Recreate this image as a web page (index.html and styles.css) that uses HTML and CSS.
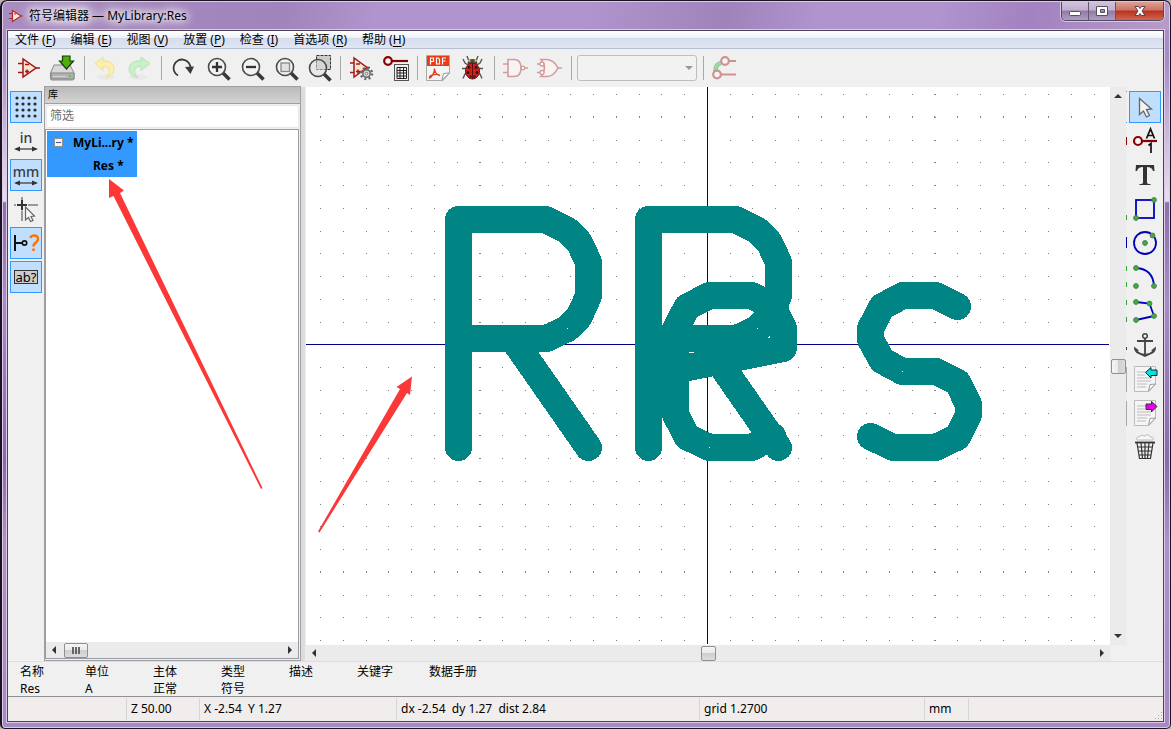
FILE: index.html
```html
<!DOCTYPE html>
<html lang="zh-CN">
<head>
<meta charset="utf-8">
<title>符号编辑器 — MyLibrary:Res</title>
<link rel="stylesheet" href="styles.css">
</head>
<body>
<div class="window">
  <header class="titlebar">
    <svg class="app-icon" viewBox="0 0 14 14"><path d="M3.500 1.500V12.500L12 7Z" fill="#fbeedd" stroke="#b3262b" stroke-width="1.200"/><path d="M0 4.500H3.500M0 9.500H3.500M12 7H14M5 5H7" stroke="#b3262b" fill="none"/></svg>
    <h1 class="title">符号编辑器 — MyLibrary:Res</h1>
    <div class="caption-buttons">
      <button class="cap" aria-label="最小化"><svg viewBox="0 0 14 14"><rect x="1.500" y="7.500" width="11" height="4" rx="1" fill="#fff" stroke="#555060"/></svg></button>
      <button class="cap" aria-label="最大化"><svg viewBox="0 0 14 14"><path d="M1.500 2.500H12.500V11.500H1.500ZM5.500 5.500V8.500H9.500V5.500Z" fill="#fff" fill-rule="evenodd" stroke="#555060"/></svg></button>
      <button class="cap cap-close" aria-label="关闭"><svg viewBox="0 0 14 14"><path d="M2 2.500H5.500L7 4.500L8.500 2.500H12L9 7L12 11.500H8.500L7 9.500L5.500 11.500H2L5 7Z" fill="#fff" stroke="#5b3e46"/></svg></button>
    </div>
  </header>
  <div class="client">
    <nav class="menubar">
      <button class="menu">文件 (<u>F</u>)</button>
      <button class="menu">编辑 (<u>E</u>)</button>
      <button class="menu">视图 (<u>V</u>)</button>
      <button class="menu">放置 (<u>P</u>)</button>
      <button class="menu">检查 (<u>I</u>)</button>
      <button class="menu">首选项 (<u>R</u>)</button>
      <button class="menu">帮助 (<u>H</u>)</button>
    </nav>
    <div class="toolbar">
      <button class="tool" aria-label="新建符号"><svg viewBox="0 0 26 26"><path d="M8 4V22L21 13Z" fill="#f9e6cd" stroke="#a5161b" stroke-width="1.500"/><path d="M3 8.500H8M3 17.500H8M21 13H25M10 9.500H14M10 16.500H14M12 14.500V18.500" stroke="#a5161b" stroke-width="1.500" fill="none"/></svg></button>
      <button class="tool" aria-label="保存"><svg viewBox="0 0 26 26"><path d="M5 10H21L25 18V23.500Q25 25 23.500 25H3Q1.500 25 1.500 23.500V18Z" fill="#d8d8d8" stroke="#8a8a8a"/><path d="M2 18H25V24H2Z" fill="#b2b2b2" stroke="#858585"/><path d="M4 21.500H17" stroke="#d5d5d5"/><rect x="20" y="20" width="2" height="2" fill="#35dc31"/><path d="M13.500 1H21V6H24.500L17.500 14L10.500 6H13.500Z" fill="#4fae0c" stroke="#173f05" stroke-width="1.200"/></svg></button>
      <span class="sep"></span>
      <button class="tool" aria-label="撤销"><svg viewBox="0 0 26 26"><ellipse cx="14" cy="22" rx="9" ry="3" fill="#e9e9e9"/><path d="M3 8.500L11 2V6C18 5 22 9 22 14C22 19 18 22 14 22.500C17 20 18 17 17 14.500C16 12 14 11 11 11.500V15.500Z" fill="#faf0ac" stroke="#ece09a"/></svg></button>
      <button class="tool" aria-label="重做"><svg viewBox="0 0 26 26"><ellipse cx="12" cy="22" rx="9" ry="3" fill="#e9e9e9"/><path d="M24 8.500L15 2V6C8 5 3 9 3 14C3 19 7 22 12 22.500C9 20 8 17 9 14.500C10 12 12 11 15 11.500V15.500Z" fill="#caf0ca" stroke="#b5e3b7"/></svg></button>
      <span class="sep"></span>
      <button class="tool" aria-label="刷新"><svg viewBox="0 0 26 26"><path d="M9 20.500A8.500 8.500 0 1 1 21.500 14" fill="none" stroke="#3a3a3a" stroke-width="1.800"/><path d="M16 12L25 11.500L21.500 19Z" fill="#3a3a3a"/></svg></button>
      <button class="tool" aria-label="放大"><svg viewBox="-2 0 26 26"><path d="M18 18L24.500 24.500" stroke="#383838" stroke-width="3.500"/><circle cx="12" cy="12" r="8.500" fill="#f2f2f2" stroke="#4a4a4a" stroke-width="1.600"/><path d="M12 7V17M7 12H17" stroke="#333" stroke-width="2.300"/></svg></button>
      <button class="tool" aria-label="缩小"><svg viewBox="-2 0 26 26"><path d="M18 18L24.500 24.500" stroke="#383838" stroke-width="3.500"/><circle cx="12" cy="12" r="8.500" fill="#f2f2f2" stroke="#4a4a4a" stroke-width="1.600"/><path d="M7 12H17" stroke="#333" stroke-width="2.300"/></svg></button>
      <button class="tool" aria-label="缩放适应"><svg viewBox="-2 0 26 26"><path d="M18 18L24.500 24.500" stroke="#383838" stroke-width="3.500"/><circle cx="12" cy="12" r="8.500" fill="#f2f2f2" stroke="#4a4a4a" stroke-width="1.600"/><rect x="8" y="8" width="8.500" height="8.500" fill="#e2e2e2" stroke="#888" stroke-width="1.300"/></svg></button>
      <button class="tool" aria-label="缩放选区"><svg viewBox="-2 0 26 26"><rect x="9.500" y="0.500" width="14" height="14" fill="#ccc" stroke="#333" stroke-dasharray="3 1"/><path d="M17 19L23.500 25.500" stroke="#383838" stroke-width="3.500"/><circle cx="11" cy="13" r="8.500" fill="#e0e0e0" fill-opacity="0.500" stroke="#4a4a4a" stroke-width="1.600"/></svg></button>
      <span class="sep"></span>
      <button class="tool" aria-label="符号属性"><svg viewBox="0 0 26 26"><path d="M6 3V22L19 12.500Z" fill="#f9e6cd" stroke="#a5161b" stroke-width="1.500"/><path d="M2 8H6M2 17.500H6M19 12.500H22M8 9H12M8 16.500H12M10 14.500V18.500" stroke="#a5161b" stroke-width="1.500" fill="none"/><circle cx="18.500" cy="18.500" r="5.500" fill="none" stroke="#666" stroke-width="2.500" stroke-dasharray="2 2.320"/><circle cx="18.500" cy="18.500" r="3.700" fill="#ddd" stroke="#666" stroke-width="1.500"/><circle cx="18.500" cy="18.500" r="1.300" fill="#eee" stroke="#777"/></svg></button>
      <button class="tool" aria-label="引脚表"><svg viewBox="0 0 26 26"><circle cx="6" cy="6" r="3.800" fill="#f5f5f5" stroke="#8b0000" stroke-width="2.200"/><path d="M10 6H26" stroke="#8b0000" stroke-width="2.200"/><rect x="12.500" y="9.500" width="14" height="16" fill="#eee" stroke="#555"/><path d="M15 12.500H24.500V23.500H15ZM15 15.500H24.500M15 18H24.500M15 21H24.500M18 12.500V23.500M21.500 12.500V23.500" fill="none" stroke="#222"/></svg></button>
      <span class="sep"></span>
      <button class="tool" aria-label="数据手册"><svg viewBox="0 0 26 26"><path d="M1.500 0.500H24.500V18L18 25.500H1.500Z" fill="#f4f4f4" stroke="#aaa"/><path d="M17 25L18.500 18.500L24.500 18Z" fill="#fff" stroke="#999"/><rect x="2" y="1" width="22" height="10" fill="#e83b16"/><path d="M5.500 9.500V3H8.500V6.500H5.500M11.500 3V9H14.500V4.500L13.500 3ZM21 3H17.500V9.500M17.500 6H20.500" fill="none" stroke="#fff" stroke-width="1.200"/><path d="M9.500 13.500C10 18 6 23 4.500 23C4 20 12 18 15 20.500M9.500 14C10 17 12 20 15 20.500" fill="none" stroke="#e23a19" stroke-width="1.300"/></svg></button>
      <button class="tool" aria-label="检查符号"><svg viewBox="0 0 26 26"><path d="M8 1L9.500 5M19 1L17.500 5M4 4L6 8L9 10M23 4L21 8L18 10M3 13.500H7M24 13.500H20M4 23.500L6 19L8 18M23 23.500L21 19L19 18" fill="none" stroke="#555" stroke-width="1.400"/><path d="M8.500 9Q8.500 4 13.500 4Q18.500 4 18.500 9Z" fill="#4c4c43"/><path d="M9.500 6H11.500M15.500 6H17.500" stroke="#d9d32d" stroke-width="1.500"/><ellipse cx="13.500" cy="16" rx="7" ry="8" fill="#cf201c" stroke="#701212"/><path d="M13.500 8V24" stroke="#511"/><circle cx="10" cy="12.500" r="1.400" fill="#311"/><circle cx="17" cy="12.500" r="1.400" fill="#311"/><circle cx="9" cy="17.500" r="1.400" fill="#311"/><circle cx="18" cy="17.500" r="1.400" fill="#311"/><circle cx="11.500" cy="21.500" r="1.100" fill="#311"/><circle cx="15.500" cy="21.500" r="1.100" fill="#311"/></svg></button>
      <span class="sep"></span>
      <button class="tool" aria-label="标准符号" disabled><svg viewBox="0 0 26 26"><path d="M6 4.500H12Q19 4.500 19 13Q19 21.500 12 21.500H6Z" fill="#f8f4f2" stroke="#d49b9b" stroke-width="1.600"/><circle cx="21" cy="13" r="1.800" fill="#fff" stroke="#d49b9b" stroke-width="1.300"/><path d="M1 9H6M1 17.500H6M23 13H26" stroke="#d49b9b" stroke-width="1.500"/></svg></button>
      <button class="tool" aria-label="德摩根符号" disabled><svg viewBox="0 0 26 26"><path d="M5 4.500H11Q18 5 22 13Q18 21 11 21.500H5Q12 13 5 4.500Z" fill="#f8f4f2" stroke="#d49b9b" stroke-width="1.600"/><path d="M1 9H4M1 17.500H4M22 13H26" stroke="#d49b9b" stroke-width="1.500"/><circle cx="6" cy="9" r="2" fill="#fff" stroke="#d49b9b" stroke-width="1.300"/><circle cx="6" cy="17.500" r="2" fill="#fff" stroke="#d49b9b" stroke-width="1.300"/></svg></button>
      <span class="sep"></span>
      <label class="unit-select"><select aria-label="单位" disabled><option></option></select></label>
      <span class="sep"></span>
      <button class="tool" aria-label="同步引脚" disabled><svg viewBox="0 0 26 26"><path d="M4.500 16Q4.500 9 10 8" fill="none" stroke="#a8b9a8" stroke-width="4.500"/><path d="M4.500 16Q4.500 9 10 8" fill="none" stroke="#92dda0" stroke-width="3"/><circle cx="14" cy="6" r="3.800" fill="#f5f5f5" stroke="#cd9393" stroke-width="2.200"/><circle cx="6" cy="19.500" r="3.800" fill="#f5f5f5" stroke="#cd9393" stroke-width="2.200"/><path d="M18 6H25M10 19.500H25" stroke="#cd9393" stroke-width="2.200"/></svg></button>
    </div>
    <div class="workspace">
      <div class="rail rail-left">
        <button class="rail-btn on" aria-label="显示栅格"><svg viewBox="0 0 26 26"><path d="M4 4H25M4 10H25M4 16H25M4 22H25" stroke="#2c2c2c" stroke-width="3.200" stroke-linecap="round" stroke-dasharray="0 6"/></svg></button>
        <button class="rail-btn"><span class="unit">in</span><svg class="unit-arrow" viewBox="0 0 26 6"><path d="M3 3H23" stroke="#333" stroke-width="1.200"/><path d="M1 3L7 0.500V5.500ZM25 3L19 0.500V5.500Z" fill="#333"/></svg></button>
        <button class="rail-btn on"><span class="unit">mm</span><svg class="unit-arrow" viewBox="0 0 26 6"><path d="M3 3H23" stroke="#333" stroke-width="1.200"/><path d="M1 3L7 0.500V5.500ZM25 3L19 0.500V5.500Z" fill="#333"/></svg></button>
        <button class="rail-btn" aria-label="光标形状"><svg viewBox="0 0 26 26"><path d="M9 1V4M9 14.500V25M1 9H3M15 9H25" stroke="#999" stroke-width="2"/><path d="M9 4V14M4 9H14" stroke="#333" stroke-width="2"/><path d="M12.500 11V24L15.500 21.500L17.500 25.500L20 24.500L18 20.500L21.500 20Z" fill="#f7f7f7" stroke="#666" stroke-width="1.200"/></svg></button>
        <button class="rail-btn on" aria-label="显示引脚电气类型"><svg viewBox="0 0 26 26"><path d="M2 5V21M2 13H9" stroke="#111" stroke-width="2"/><circle cx="11.500" cy="13" r="2.200" fill="none" stroke="#111" stroke-width="1.700"/><path d="M17.500 8Q18 5.500 21 5.500Q25 5.500 25 9Q25 11 23 12.500Q20.500 14 20.500 16.500M20.500 18.500V21" fill="none" stroke="#ff7200" stroke-width="2.500"/></svg></button>
        <button class="rail-btn on"><span class="ab">ab?</span></button>
      </div>
      <section class="tree-panel">
        <h2 class="tree-title">库</h2>
        <input class="filter" type="text" placeholder="筛选" aria-label="筛选">
        <div class="tree">
          <ul class="nodes">
            <li class="node"><button class="expander" aria-label="折叠"></button><span>MyLi...ry *</span></li>
            <li class="node leaf"><span>Res *</span></li>
          </ul>
          <svg class="callout callout-tree" viewBox="0 0 155 311"><path d="M0 0L15 11.500L11 14L153.500 309L152 310L4.500 17L0 19Z" fill="#fb3737"/></svg>
          <div class="hbar tree-bar"><i class="tri left"></i><i class="thumb grip"></i><i class="tri right"></i></div>
        </div>
      </section>
      <div class="sash"></div>
      <main class="editor">
        <svg class="sheet" viewBox="306 87 804 558" preserveAspectRatio="xMidYMid slice">
          <defs>
            <pattern id="dots" x="320" y="94" width="91" height="91" patternUnits="userSpaceOnUse"><path d="M0 .5h1m22 0h1m22 0h1m21 0h1M0 23.500h1m22 0h1m22 0h1m21 0h1M0 46.500h1m22 0h1m22 0h1m21 0h1M0 68.500h1m22 0h1m22 0h1m21 0h1" stroke="#808080" shape-rendering="crispEdges"/></pattern>
            <pattern id="dots-right" href="#dots" patternTransform="translate(1 0)"/>
            <pattern id="dots-up" href="#dots" patternTransform="translate(0 -1)"/>
          </defs>
          <path d="M306 87H1110V645H306Z" fill="#fff"/>
          <path d="M306 87H1110V645H306Z" fill="url(#dots)"/>
          <path d="M480 87h1v558h-1ZM935 87h1v558h-1Z" fill="url(#dots-right)"/>
          <path d="M306 116h804v1H306ZM306 571h804v1H306Z" fill="url(#dots-up)"/>
          <path d="M306 344.500H1109M707.500 87V644" stroke="#000084" shape-rendering="crispEdges"/>
          <g fill="none" stroke="#008484" stroke-width="27" stroke-linecap="round" stroke-linejoin="round" shape-rendering="crispEdges">
            <path id="r" d="M458.500 447.500V219.500H545.500L567.500 230.500L579 242L588.500 262V296L579 317L567.500 328.500L546.500 338.500H458.500M512.500 338.500L588.500 447.500"/>
            <use href="#r" x="190"/>
            <path d="M773 436.500L751.500 447.500H709.500L687 436.800L675.500 414.500V329L687 307L709.500 295.500H751.500L773 306.500L783.500 328V348.500L675.500 370"/>
            <path d="M957.500 306.500L935.500 295.500H903L882 306.500L870.500 328.500V339.500L882 360.500L902.500 371.500H936L957.700 382.500L968.500 404.500V415L957.500 437L935.500 447.500H893L870.500 436.500"/>
          </g>
          <path d="M412 376.500L396.500 387L400 389L318 531.500L319.500 532.500L407 393L410 395Z" fill="#fb3737"/>
        </svg>
        <div class="vbar"><i class="tri up"></i><i class="thumb"></i><i class="tri down"></i></div>
        <div class="hbar"><i class="tri left"></i><i class="thumb"></i><i class="tri right"></i></div>
      </main>
      <div class="rail-right-wrap">
        <svg class="edge" viewBox="0 0 1 374" shape-rendering="crispEdges"><path d="M0 4h1v1H0ZM0 35h1v1H0Z" fill="#2f94f5"/><path d="M0 50h1v8H0Z" fill="#8b0000"/><path d="M0 150h1v11H0Z" fill="#00a"/><path d="M0 128h1v5H0ZM0 179h1v5H0ZM0 195h1v5H0ZM0 213h1v5H0ZM0 230h1v5H0Z" fill="#36a336"/><path d="M0 260h1v3H0Z" fill="#444"/><path d="M0 280h1v25H0ZM0 314h1v25H0Z" fill="#aaa"/></svg>
        <div class="rail">
          <button class="rail-btn on" aria-label="选择"><svg viewBox="0 0 26 26"><path d="M7.500 4.500V20.500L11.500 17L14.500 23L17.500 21.500L14.500 15.500L19.500 15Z" fill="#f5f3ef" stroke="#666" stroke-width="1.300"/></svg></button>
          <button class="rail-btn" aria-label="引脚"><svg viewBox="0 0 26 26"><circle cx="6" cy="13" r="4" fill="#f5f5f5" stroke="#8b0000" stroke-width="2.200"/><path d="M10 13H25" stroke="#8b0000" stroke-width="2.200"/><path d="M14.500 10.500L18.500 1L22.500 10.500M16 7.500H21M16.500 17.500L19 15.500V25" fill="none" stroke="#111" stroke-width="1.700"/></svg></button>
          <button class="rail-btn" aria-label="文字"><svg viewBox="0 0 26 26"><path d="M4 3H22L22.500 9H21Q20 5 15 5V20.500Q15 22 18.500 22V23H7.500V22Q11 22 11 20.500V5Q6 5 5 9H3.500Z" fill="#333"/></svg></button>
          <button class="rail-btn" aria-label="矩形"><svg viewBox="0 0 26 26"><rect x="4" y="4" width="18" height="18" fill="none" stroke="#0000c2" stroke-width="1.800"/><g fill="#36b336" stroke="#557a55"><circle cx="4" cy="22" r="2.400"/><circle cx="22" cy="4" r="2.400"/></g></svg></button>
          <button class="rail-btn" aria-label="圆"><svg viewBox="0 0 26 26"><circle cx="13" cy="13" r="11" fill="none" stroke="#0000b8" stroke-width="1.800"/><g fill="#36b336" stroke="#557a55"><circle cx="13" cy="13" r="2.400"/><circle cx="20.500" cy="5.500" r="2.400"/></g></svg></button>
          <button class="rail-btn" aria-label="圆弧"><svg viewBox="0 0 26 26"><path d="M4 4Q21 5 22 22" fill="none" stroke="#0000c2" stroke-width="1.800"/><g fill="#36b336" stroke="#557a55"><circle cx="4" cy="4" r="2.400"/><circle cx="4" cy="22" r="2.400"/><circle cx="22" cy="22" r="2.400"/></g></svg></button>
          <button class="rail-btn" aria-label="线"><svg viewBox="0 0 26 26"><path d="M4 4L17.500 5.500L22 18L4 22" fill="none" stroke="#0000c2" stroke-width="1.800"/><g fill="#36b336" stroke="#557a55"><circle cx="4" cy="4" r="2.400"/><circle cx="17.500" cy="5.500" r="2.400"/><circle cx="22" cy="18" r="2.400"/><circle cx="4" cy="22" r="2.400"/></g></svg></button>
          <button class="rail-btn" aria-label="锚点"><svg viewBox="0 0 26 26"><circle cx="13" cy="4" r="2.300" fill="none" stroke="#444" stroke-width="1.500"/><path d="M13 6V23M5 9H21" stroke="#444" stroke-width="1.800"/><path d="M2 14.500L7 18.500L5.500 19Q8 21.500 13 22Q18 21.500 20.500 19L19 18.500L24 14.500Q24 19 21.500 21L13 25L4.500 21Q2 19 2 14.500Z" fill="#444"/></svg></button>
          <button class="rail-btn" aria-label="导入"><svg viewBox="0 0 26 26"><path d="M2.500 0.500H23.500V18L17 25.500H2.500Z" fill="#f5f5f5" stroke="#bbb"/><path d="M5 6H14M5 9H13M5 12H19M5 15H19M5 18H15M5 21H14" stroke="#bbb"/><path d="M16.500 25L18 18.500L23.500 18Z" fill="#fff" stroke="#999"/><path d="M13.500 6.500L19 1.500V4H25V9.500H19V12Z" fill="#00e3e3" stroke="#222"/></svg></button>
          <button class="rail-btn" aria-label="导出"><svg viewBox="0 0 26 26"><path d="M2.500 0.500H23.500V18L17 25.500H2.500Z" fill="#f5f5f5" stroke="#bbb"/><path d="M5 6H14M5 9H13M5 12H19M5 15H19M5 18H15M5 21H14" stroke="#bbb"/><path d="M16.500 25L18 18.500L23.500 18Z" fill="#fff" stroke="#999"/><path d="M25 6.500L19.500 1.500V4H14V9.500H19.500V12Z" fill="#ec00ec" stroke="#333"/></svg></button>
          <button class="rail-btn" aria-label="删除"><svg viewBox="0 0 26 26"><path d="M5 6Q3 3 7 3Q9 0 13 2Q17 -1 18 3Q23 3 21 6Z" fill="#f8f8f8" stroke="#bbb"/><path d="M3 8.500H23" stroke="#333" stroke-width="1.800"/><path d="M5 9L7.500 24.500H18.500L21 9M9 9L10.500 24M13 9V24M17 9L15.500 24M5.500 13H20.500M6 17H20M7 21H19" fill="none" stroke="#333" stroke-width="1.200"/></svg></button>
        </div>
      </div>
    </div>
    <dl class="info">
      <div><dt>名称</dt><dd>Res</dd></div>
      <div><dt>单位</dt><dd>A</dd></div>
      <div><dt>主体</dt><dd>正常</dd></div>
      <div><dt>类型</dt><dd>符号</dd></div>
      <div><dt>描述</dt><dd></dd></div>
      <div><dt>关键字</dt><dd></dd></div>
      <div><dt>数据手册</dt><dd></dd></div>
    </dl>
    <footer class="status">
      <span></span><span>Z 50.00</span><span>X -2.54&nbsp; Y 1.27</span><span>dx -2.54&nbsp; dy 1.27&nbsp; dist 2.84</span><span>grid 1.2700</span><span>mm</span>
      <span class="resize"><svg viewBox="0 0 9 9"><path d="M7 1h1v1H7ZM4 4h1v1H4ZM7 4h1v1H7ZM1 7h1v1H1ZM4 7h1v1H4ZM7 7h1v1H7Z" fill="#aaa"/></svg></span>
    </footer>
  </div>
</div>
</body>
</html>
```
FILE: styles.css
```css
* { box-sizing: border-box; }
body {
  margin: 0;
  background: #b9b3ad;
  color: #000;
  font: 12px/16px "Noto Sans", "Noto Sans CJK SC", sans-serif;
}
button, input, select { font: inherit; color: inherit; }
button { border: 0; padding: 0; background: none; }
svg { display: block; }

.window {
  display: flex;
  flex-direction: column;
  height: 100vh;
  padding: 0 6px 6px 5px;
  border: 1px solid #1b1322;
  border-left-width: 2px;
  border-radius: 7px 7px 5px 5px;
  box-shadow: inset 0 0 0 1px #dccbe8;
  background: linear-gradient(#ab8fc8 0, #a88bc6 60px, #c3abd4 110px, #eadcee 200px, #8f6fae 202px, #a98bc8 300px, #8a6aa8 460px, #b08fca 540px, #a588c4 100%);
}
.titlebar {
  display: flex;
  align-items: center;
  gap: 6px;
  height: 28px;
  flex: none;
  margin: 1px -5px 0 -4px;
  padding-left: 6px;
  border-radius: 6px 6px 0 0;
  background: linear-gradient(100deg, #a98cc0 0, #a184bc 24%, #b194cd 32%, #b194cd 50%, #a083bb 62%, #b094ce 70%, #b094ce 80%, #a282c0 88%, #b99bc9 100%);
}
.app-icon { width: 14px; height: 14px; }
.title {
  margin: 0;
  font-size: 12px;
  font-weight: 400;
  text-shadow: 0 0 6px #fff, 0 0 10px #fff, 0 0 14px #fff, 0 0 14px #fff;
}
.caption-buttons {
  display: flex;
  align-self: flex-start;
  margin-left: auto;
  margin-right: 5px;
  border: 1px solid #554a63;
  border-top: 0;
  border-radius: 0 0 5px 5px;
  overflow: hidden;
  box-shadow: 0 0 0 1px #d8c5e3;
}
.cap {
  display: grid;
  place-items: center;
  width: 27px;
  height: 18px;
  border-right: 1px solid #62566f;
  background: linear-gradient(#d0c2dc, #c0afd0 45%, #8e7ba5 50%, #b09cc2);
}
.cap svg { width: 14px; height: 14px; }
.cap-close { width: 47px; border: 0; background: linear-gradient(#dba294, #cd7263 45%, #b83121 50%, #d2664c); }

.client {
  display: flex;
  flex-direction: column;
  flex: 1;
  min-height: 0;
  border: 1px solid #4c4156;
  background: #f0f0f0;
  box-shadow: 0 0 0 1px #dccbe8;
}
.menubar {
  display: flex;
  flex: none;
  gap: 15px;
  height: 18px;
  padding-left: 7px;
  border-bottom: 1px solid #b7bfd3;
  background: linear-gradient(#fff 0, #f0f3f9 38%, #d5dcec 40%, #dfe5f3 100%);
}
.menu u { text-underline-offset: 2px; }

.toolbar { display: flex; flex: none; align-items: center; height: 38px; padding-left: 3px; }
.tool { display: grid; place-items: center; width: 34px; height: 34px; }
.tool svg, .rail-btn svg { width: 26px; height: 26px; overflow: visible; }
.sep { width: 9px; height: 24px; padding-left: 5px; }
.sep::before { content: ""; display: block; width: 1px; height: 24px; background: #a8a8a8; }
.unit-select { position: relative; width: 120px; margin: 0 1px 0 2px; }
.unit-select select {
  display: block;
  width: 100%;
  height: 26px;
  appearance: none;
  border: 1px solid #aaa;
  border-radius: 3px;
  background: #f4f4f4;
}
.unit-select::after {
  content: "";
  position: absolute;
  right: 4px;
  top: 11px;
  border: 4px solid transparent;
  border-top-color: #999;
  border-bottom: 0;
}

.workspace { display: flex; flex: 1; min-height: 0; }
.rail { display: flex; flex-direction: column; gap: 2px; padding-top: 4px; }
.rail-left { width: 36px; padding-left: 2px; }
.rail-btn {
  display: flex;
  flex-direction: column;
  align-items: center;
  justify-content: center;
  width: 32px;
  height: 32px;
  border: 1px solid transparent;
}
.rail-btn.on { border-color: #3399ff; background: #c0dfff; }
.unit { font: 500 14px/16px "Noto Sans", sans-serif; color: #3b3b3b; }
.rail-btn .unit-arrow { height: 6px; }
.ab {
  padding: 0 1px;
  border: 1px solid #333;
  background: #ccc;
  font: 13px/12px "Noto Sans", sans-serif;
}

.tree-panel {
  display: flex;
  flex-direction: column;
  flex: 0 0 257px;
  margin-top: -1px;
  border: 1px solid #a0a0a0;
  background: #f0f0f0;
}
.tree-title {
  margin: 0;
  height: 17px;
  padding-left: 3px;
  border-bottom: 1px solid #a0a0a0;
  background: linear-gradient(#bababa, #d4d4d4);
  font-size: 10px;
  font-weight: 400;
  line-height: 15px;
}
.filter {
  margin: 1px;
  height: 23px;
  padding: 0 3px 2px;
  border: 1px solid #e3e9ef;
  border-radius: 2px;
  background: #fff;
}
.filter::placeholder { color: #6d6d6d; opacity: 1; }
.tree {
  position: relative;
  display: flex;
  flex: 1;
  flex-direction: column;
  justify-content: space-between;
  margin: 0 1px 1px 0;
  border: 1px solid #989ca4;
  background: #fff;
}
.nodes {
  width: 90px;
  margin: 1px;
  padding: 0;
  background: #3399ff;
  list-style: none;
  font-weight: 700;
}
.node { display: flex; align-items: center; gap: 10px; height: 23px; padding-left: 7px; white-space: nowrap; }
.leaf { padding-left: 46px; }
.expander { position: relative; width: 9px; height: 9px; border: 1px solid #919191; background: #f4f4f4; }
.expander::before { content: ""; display: block; width: 5px; height: 1px; margin: 0 auto; background: #3b58a5; }
.callout { position: absolute; pointer-events: none; }
.callout-tree { left: 63px; top: 49px; width: 155px; height: 311px; }

.hbar, .vbar {
  display: flex;
  align-items: center;
  justify-content: space-between;
  background: #ebebeb;
}
.hbar { height: 16px; padding: 0 6px; }
.vbar { flex-direction: column; padding: 7px 0; }
.tree-bar { justify-content: flex-start; gap: 8px; }
.tree-bar .right { margin-left: auto; }
.thumb {
  width: 15px;
  height: 15px;
  border: 1px solid #8f8f8f;
  border-radius: 2px;
  background: linear-gradient(#f5f5f5 0, #e9e9e9 48%, #cfcfd1 50%, #dcdcdc 100%);
}
.vbar .thumb { background: linear-gradient(90deg, #f5f5f5 0, #e9e9e9 48%, #cfcfd1 50%, #dcdcdc 100%); }
.grip { display: grid; place-items: center; width: 24px; }
.grip::before { content: ""; width: 8px; height: 7px; background: repeating-linear-gradient(90deg, #666 0, #666 2px, transparent 2px, transparent 3px); }
.tri { border: 4px solid transparent; }
.left { border-left: 0; border-right-color: #333; }
.right { border-right: 0; border-left-color: #333; }
.up { border-top: 0; border-bottom-color: #333; }
.down { border-bottom: 0; border-top-color: #333; }

.sash { flex: 0 0 5px; border-right: 1px solid #eee; background: #dcdcdc; }
.editor { display: grid; flex: 1; grid-template: minmax(0, 1fr) 16px / minmax(0, 1fr) 16px; min-width: 0; }
.sheet { width: 100%; height: 100%; overflow: hidden; }
.rail-right-wrap { display: flex; flex: 0 0 37px; gap: 2px; }
.edge { width: 1px; height: 374px; }

.info {
  display: grid;
  flex: none;
  grid-template-columns: 65px 68px 68px 68px 68px 72px 1fr;
  margin: 0;
  height: 36px;
  padding: 1px 0 0 12px;
  border-top: 1px solid #dedede;
  border-bottom: 1px solid #909090;
  line-height: 17px;
}
.info dd { margin: 0; }
.status {
  display: grid;
  flex: none;
  grid-template-columns: 119px 73px 197px 303px 225px 44px 1fr;
  height: 24px;
  padding: 1px 0;
  background: #f1edec;
  line-height: 22px;
}
.status span { padding-left: 4px; border-right: 1px solid #d5d5d5; white-space: pre; }
.status .resize { display: flex; align-items: flex-end; justify-content: flex-end; border: 0; }
.resize svg { width: 9px; height: 9px; }
```
